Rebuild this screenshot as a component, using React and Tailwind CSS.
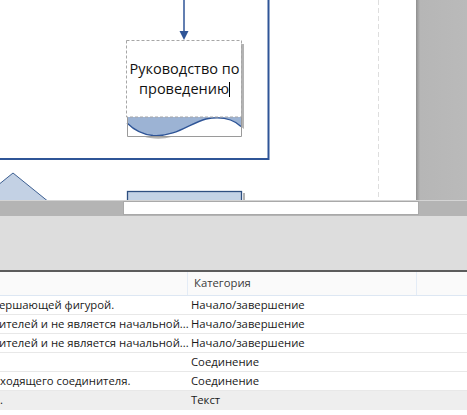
import React from 'react';

const rows = [
  { desc: 'ершающей фигурой.', cat: 'Начало/завершение', off: '-ml-[1px]' },
  { desc: 'ителей и не является начальной...', cat: 'Начало/завершение', off: '-ml-[1px]' },
  { desc: 'ителей и не является начальной...', cat: 'Начало/завершение', off: '-ml-[1px]' },
  { desc: '', cat: 'Соединение', off: '' },
  { desc: 'ходящего соединителя.', cat: 'Соединение', off: 'ml-0' },
  { desc: '.', cat: 'Текст', off: 'ml-0', selected: true },
];

const Canvas = () => (
  <div className="relative w-[416px] h-full bg-white overflow-hidden">
    <svg width="416" height="200" className="absolute left-0 top-0">
      {/* page margin guide */}
      <line x1="378.5" y1="0" x2="378.5" y2="200" stroke="#dedede" strokeDasharray="5 3" />
      {/* container frame */}
      <path d="M -5 159 H 268.5 V -5" fill="none" stroke="#2f5597" strokeWidth="2" />
      {/* arrow */}
      <line x1="184" y1="0" x2="184" y2="33" stroke="#2f5597" strokeWidth="1.5" />
      <polygon points="179.5,31 188.5,31 184,40" fill="#2f5597" />
      {/* document shadow */}
      <path d="M 130 44 H 244 V 129 C 232 119 220 118 206 122 C 190 127 175 142 150 138 C 142 137 135 133 130 128 Z" fill="#b3b3b3" />
      {/* document */}
      <rect x="127" y="41" width="114" height="95" fill="#fff" />
      <path d="M 127 117 H 241 V 126.5 C 232 118 220 116.5 206 119 C 190 123 176 137 153 135.5 C 142 134.5 134 130 127 123 Z" fill="#9cb3d4" />
      <path d="M 127 123 C 134 130 142 134.5 153 135.5 C 176 137 190 123 206 119 C 220 116.5 232 118 241 126.5" fill="none" stroke="#2f5597" strokeWidth="1.3" />
      <path d="M 127.5 117 V 136.5 H 241.5 V 117" fill="none" stroke="#9a9a9a" strokeWidth="1" />
      <rect x="126.5" y="40.5" width="115" height="76.5" fill="none" stroke="#a6a6a6" strokeDasharray="3 2" />
      {/* diamond */}
      <polygon points="13,173 60,211 13,250 -34,211" fill="#c3d1e4" stroke="#3d5f91" strokeWidth="1" />
      {/* process box */}
      <rect x="243" y="193" width="2" height="10" fill="#b3b3b3" />
      <rect x="127.5" y="191.5" width="114" height="14" fill="#c3d2e5" stroke="#2e4f80" strokeWidth="1.3" />
    </svg>
    <div
      className="absolute left-[127px] top-[59px] w-[115px] text-center text-[14.5px] leading-[20px] text-[#111]"
      style={{ fontFamily: '"Open Sans", "Noto Sans", sans-serif' }}
    >
      Руководство по
      <br />
      проведению<span className="inline-block w-px h-[15px] bg-black align-[-3px]" />
    </div>
  </div>
);

export default function App() {
  return (
    <div
      className="w-[467px] h-[415px] overflow-hidden flex flex-col bg-white"
      style={{ fontFamily: '"Open Sans", "Noto Sans", sans-serif' }}
    >
      <div className="h-[200px] flex shrink-0">
        <Canvas />
        <div className="flex-1 bg-[linear-gradient(to_right,#8f8f8f,#b6b6b6_4px,#bababa)]" />
      </div>

      <div className="h-[16px] shrink-0 bg-[#b4b4b4] border-t border-[#d4d4d4] flex items-start">
        <div className="ml-[123px] w-[296px] h-[14px] bg-white border border-[#a9a9a9]" />
      </div>

      <div className="h-[56px] shrink-0 bg-[#dddddd] border-b-2 border-[#5c5c5c]" />

      <div className="flex-1 bg-white text-[11.3px] text-[#1a1a1a]">
        <div className="h-[24px] flex bg-[#fafafa] border-b border-[#dde7f3]">
          <div className="w-[188px] border-r border-[#e4ecf6]" />
          <div className="w-[229px] border-r border-[#e4ecf6] pl-[6px] flex items-center text-[#3a3a3a]">
            Категория
          </div>
          <div className="flex-1" />
        </div>
        {rows.map((r, i) => (
          <div
            key={i}
            className={`h-[19px] flex items-center border-b ${r.selected ? 'bg-[#eeeeee] border-[#eeeeee]' : 'border-[#e8e8e8]'}`}
          >
            <div className="w-[188px] whitespace-nowrap">
              <span className={`inline-block ${r.off}`}>{r.desc}</span>
            </div>
            <div className="pl-[3px] whitespace-nowrap">{r.cat}</div>
          </div>
        ))}
      </div>
    </div>
  );
}
